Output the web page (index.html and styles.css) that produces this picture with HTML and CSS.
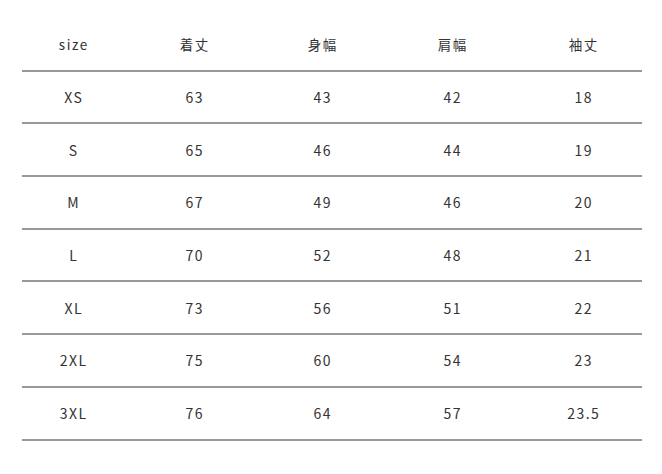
FILE: index.html
```html
<!DOCTYPE html>
<html lang="ja">
<head>
<meta charset="utf-8">
<link rel="stylesheet" href="styles.css">
</head>
<body>
<div class="size-table">
  <div class="row head"><span>size</span><span>着丈</span><span>身幅</span><span>肩幅</span><span>袖丈</span></div>
  <div class="row"><span>XS</span><span>63</span><span>43</span><span>42</span><span>18</span></div>
  <div class="row"><span>S</span><span>65</span><span>46</span><span>44</span><span>19</span></div>
  <div class="row"><span>M</span><span>67</span><span>49</span><span>46</span><span>20</span></div>
  <div class="row"><span>L</span><span>70</span><span>52</span><span>48</span><span>21</span></div>
  <div class="row"><span>XL</span><span>73</span><span>56</span><span>51</span><span>22</span></div>
  <div class="row"><span>2XL</span><span>75</span><span>60</span><span>54</span><span>23</span></div>
  <div class="row"><span>3XL</span><span>76</span><span>64</span><span>57</span><span>23.5</span></div>
</div>
</body>
</html>
```
FILE: styles.css
```css
html, body {
  margin: 0;
  padding: 0;
  background: #fff;
}
body {
  font-family: "Noto Sans CJK JP", "Noto Sans", sans-serif;
  color: #333;
  font-size: 14px;
}
.size-table {
  margin: 19px 0 0 22px;
  width: 620px;
}
.row {
  display: grid;
  grid-template-columns: 102px 140px 116px 144px 118px;
  height: 50.7px;
  border-bottom: 2px solid #999;
  align-items: center;
}
.row span {
  text-align: center;
  letter-spacing: 1.5px;
  padding-left: 1.5px;
  line-height: 1;
}
.head span {
  font-size: 13.5px;
}
```
